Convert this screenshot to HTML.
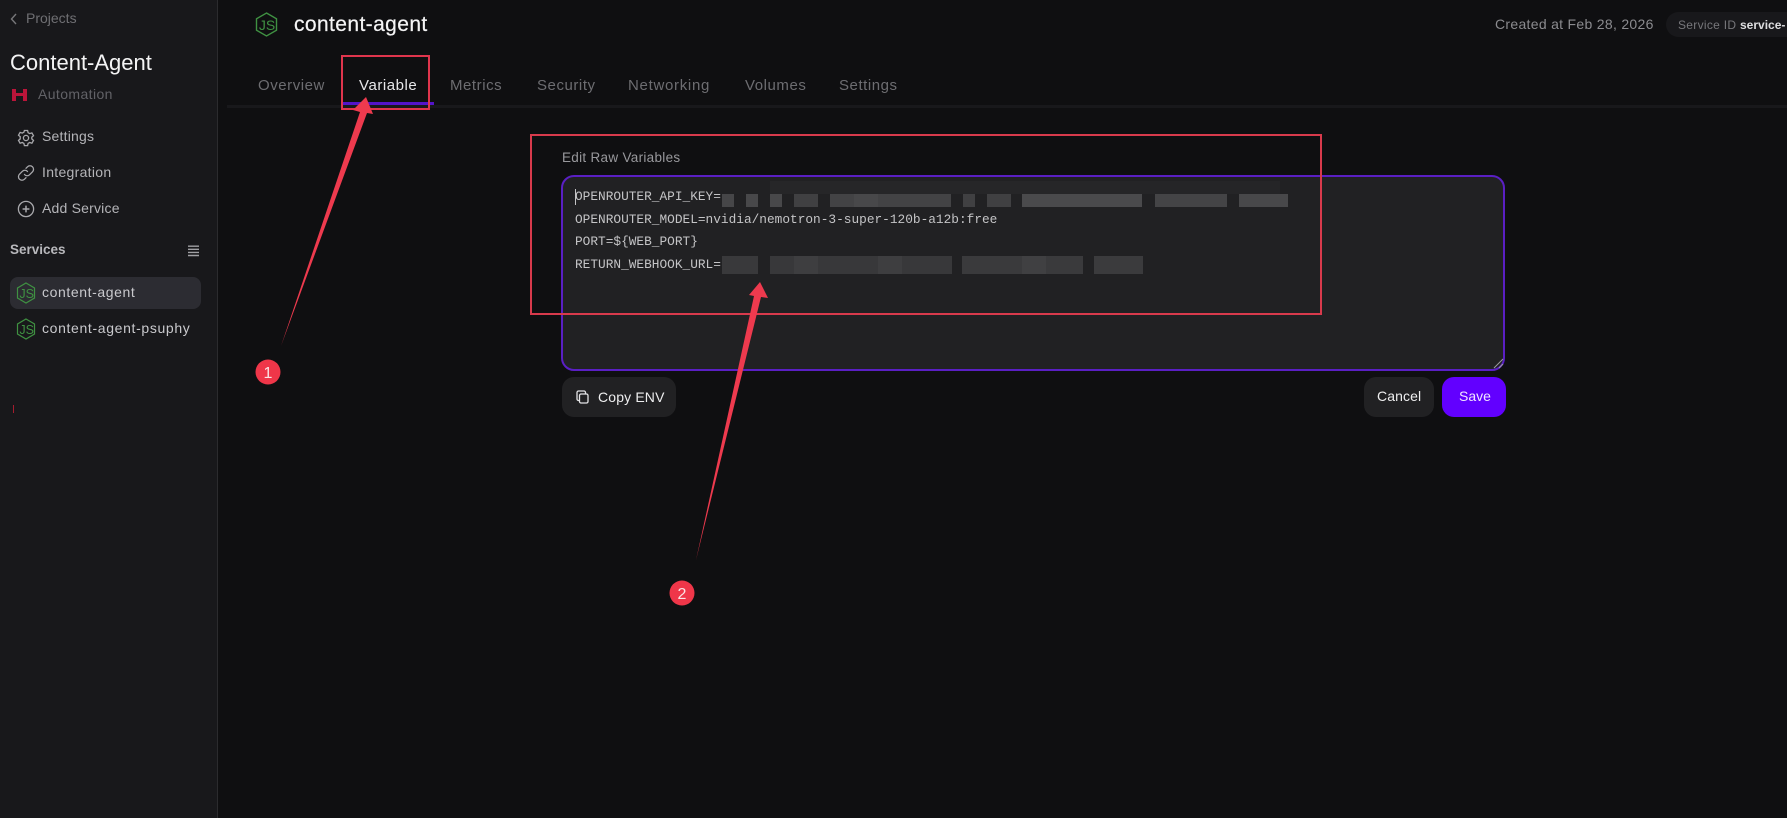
<!DOCTYPE html>
<html><head><meta charset="utf-8">
<style>
*{box-sizing:border-box}
html,body{margin:0;padding:0;width:1787px;height:818px;overflow:hidden;background:#0f0f11}
body{position:relative;font-family:"Liberation Sans",sans-serif}
.t{position:absolute;white-space:nowrap;line-height:20px}
.abs{position:absolute}
.mono{font-family:"Liberation Mono",monospace;font-size:12.8px;color:#c4c4c6}
svg{position:absolute;overflow:visible}
.tab{font-size:15px;color:#6d6d71;letter-spacing:.55px;top:76px}
</style></head><body>
<div class="abs" style="left:0;top:0;height:818px;background:#18181b;border-right:1px solid #2b2b2e;width:218px"></div>

<svg style="left:10px;top:13px" width="8" height="12" fill="none" stroke="#77777a" stroke-width="1.4"><path d="M6 1 L1.500 6 L6 11"/></svg>
<div class="t" style="left:26px;top:8px;font-size:14px;color:#6f6f73">Projects</div>
<div class="t" style="left:10px;top:53px;font-size:22px;color:#f4f4f5">Content-Agent</div>
<svg style="left:12px;top:89px" width="16" height="12" fill="#bb153a"><path d="M0 0h4v4h7V0h4v12h-4V7H4v5H0z"/></svg>
<div class="t" style="left:38px;top:84px;font-size:14px;color:#626267;letter-spacing:.4px">Automation</div>

<svg style="left:17px;top:129px" width="18" height="18" viewBox="0 0 18 18" fill="none" stroke="#a8a8ac" stroke-width="1.3"><path d="M7.400 1.500h3.200l.5 2.200 1.600.9 2.200-.7 1.600 2.800-1.700 1.500v1.700l1.700 1.500-1.600 2.800-2.200-.7-1.600.9-.5 2.200H7.400l-.5-2.200-1.600-.9-2.200.7-1.600-2.800 1.700-1.500V7.700L1.500 6.200l1.600-2.800 2.200.7 1.600-.9z"/><circle cx="9" cy="9" r="2.600"/></svg>
<div class="t" style="left:42px;top:126px;font-size:14px;color:#b4b4b8;letter-spacing:.2px">Settings</div>
<svg style="left:17px;top:164px" width="18" height="18" viewBox="0 0 18 18" fill="none" stroke="#a8a8ac" stroke-width="1.3" stroke-linecap="round"><path d="M7.500 10.500a3.400 3.400 0 0 0 5 .3l3-3a3.500 3.500 0 0 0-5-5L9 4.300"/><path d="M10.500 7.500a3.400 3.400 0 0 0-5-.3l-3 3a3.500 3.500 0 0 0 5 5L9 13.700"/></svg>
<div class="t" style="left:42px;top:162px;font-size:14px;color:#b4b4b8;letter-spacing:.3px">Integration</div>
<svg style="left:17px;top:200px" width="18" height="18" viewBox="0 0 18 18" fill="none" stroke="#a8a8ac" stroke-width="1.3"><circle cx="9" cy="9" r="7.600"/><path d="M9 5.600v6.800M5.600 9h6.800" stroke-width="1.5"/></svg>
<div class="t" style="left:42px;top:198px;font-size:14px;color:#b4b4b8;letter-spacing:.2px">Add Service</div>

<div class="t" style="left:10px;top:240px;font-size:13.500px;font-weight:700;color:#b8b8bc">Services</div>
<svg style="left:187px;top:245px" width="13" height="13" fill="#a0a0a4"><path d="M1 .5h11v1.400H1zM1 3.600h11V5H1zM1 6.700h11v1.400H1zM1 9.800h11v1.400H1z"/></svg>

<div class="abs" style="left:10px;top:277px;width:191px;height:32px;background:#2c2c32;border-radius:8px"></div>
<svg style="left:16px;top:282px" width="20" height="22" viewBox="0 0 20 22" fill="none" stroke="#3f9142" stroke-width="1.2"><path d="M10 1l8.500 5v10L10 21l-8.500-5V6z"/><text x="3.400" y="16" font-family="Liberation Sans" font-size="12.500" fill="#3f9142" stroke="none">JS</text></svg>
<div class="t" style="left:42px;top:282px;font-size:14px;color:#c9c9cd;letter-spacing:.6px">content-agent</div>
<svg style="left:16px;top:318px" width="20" height="22" viewBox="0 0 20 22" fill="none" stroke="#3f9142" stroke-width="1.2"><path d="M10 1l8.500 5v10L10 21l-8.500-5V6z"/><text x="3.400" y="16" font-family="Liberation Sans" font-size="12.500" fill="#3f9142" stroke="none">JS</text></svg>
<div class="t" style="left:42px;top:318px;font-size:14px;color:#c9c9cd;letter-spacing:.65px">content-agent-psuphy</div>
<div class="abs" style="left:13px;top:405px;width:1px;height:8px;background:#a51c2e"></div>

<svg style="left:255px;top:12px" width="23" height="25" viewBox="0 0 23 25" fill="none" stroke="#3f9142" stroke-width="1.4"><path d="M11.500 1l10 5.800v11.400l-10 5.800-10-5.800V6.800z"/><text x="3.900" y="18" font-family="Liberation Sans" font-size="14" fill="#3f9142" stroke="none">JS</text></svg>
<div class="t" style="left:294px;top:15px;font-size:21px;color:#f4f4f5;letter-spacing:.4px;-webkit-text-stroke:.2px #f4f4f5">content-agent</div>

<div class="t tab" style="left:258px">Overview</div>
<div class="t tab" style="left:359px;color:#e8e8ea">Variable</div>
<div class="t tab" style="left:450px">Metrics</div>
<div class="t tab" style="left:537px">Security</div>
<div class="t tab" style="left:628px;letter-spacing:.7px">Networking</div>
<div class="t tab" style="left:745px">Volumes</div>
<div class="t tab" style="left:839px">Settings</div>
<div class="abs" style="left:227px;top:105px;width:1560px;height:3px;background:#18181b"></div>
<div class="abs" style="left:343px;top:102px;width:91px;height:3px;background:#5314c9"></div>

<div class="t" style="left:1495px;top:14px;font-size:14px;color:#8b8b8f;letter-spacing:.3px">Created at Feb 28, 2026</div>
<div class="abs" style="left:1666px;top:12px;width:140px;height:25px;background:#18181b;border-radius:13px"></div>
<div class="t" style="left:1678px;top:15px;font-size:12px;color:#77777b;letter-spacing:.3px">Service ID</div>
<div class="t" style="left:1740px;top:15px;font-size:12px;font-weight:700;color:#dedee0">service-</div>

<div class="t" style="left:562px;top:148px;font-size:13.500px;color:#98989c;letter-spacing:.3px">Edit Raw Variables</div>
<div class="abs" style="left:561px;top:175px;width:944px;height:196px;background:#212123;border:2.500px solid #5a1fc4;border-radius:13px"></div>
<svg style="left:1494px;top:359px" width="9" height="9" stroke="#9a9a9e" stroke-width="1"><path d="M0 9L9 0M5 9L9 5"/></svg>

<svg style="left:0;top:0" width="1787" height="818">
<g fill="#262628"><rect x="770" y="181" width="350" height="13"/><rect x="1120" y="181" width="160" height="13" fill="#252527"/></g>
<rect x="722" y="194" width="12" height="13" fill="#464648"/><rect x="746" y="194" width="12" height="13" fill="#48484a"/><rect x="770" y="194" width="12" height="13" fill="#48484a"/><rect x="794" y="194" width="24" height="13" fill="#404042"/><rect x="830" y="194" width="121" height="13" fill="#434345"/><rect x="963" y="194" width="12" height="13" fill="#404042"/><rect x="987" y="194" width="24" height="13" fill="#404042"/><rect x="1022" y="194" width="120" height="13" fill="#4a4a4c"/><rect x="1155" y="194" width="72" height="13" fill="#444446"/><rect x="1239" y="194" width="49" height="13" fill="#48484a"/>
<rect x="722" y="256" width="36" height="18" fill="#39393b"/><rect x="770" y="256" width="182" height="18" fill="#38383a"/><rect x="962" y="256" width="121" height="18" fill="#3a3a3c"/><rect x="1094" y="256" width="49" height="18" fill="#3b3b3d"/>
<g fill="#fff" opacity=".03"><rect x="854" y="194" width="24" height="13"/><rect x="794" y="256" width="24" height="18"/><rect x="878" y="256" width="24" height="18"/><rect x="1022" y="256" width="24" height="18"/></g>
</svg>

<div class="t mono" style="left:575px;top:187px">OPENROUTER_API_KEY=</div>
<div class="t mono" style="left:575px;top:210px">OPENROUTER_MODEL=nvidia/nemotron-3-super-120b-a12b:free</div>
<div class="t mono" style="left:575px;top:232px">PORT=${WEB_PORT}</div>
<div class="t mono" style="left:575px;top:255px">RETURN_WEBHOOK_URL=</div>
<div class="abs" style="left:575px;top:189px;width:1px;height:16px;background:#c4c4c6"></div>

<div class="abs" style="left:562px;top:377px;width:114px;height:40px;background:#212123;border-radius:12px"></div>
<svg style="left:576px;top:390px" width="13" height="14" fill="none" stroke="#e4e4e6" stroke-width="1.300"><rect x="3.500" y="4" width="8.500" height="9" rx="1.500"/><path d="M3.500 10.500H2.500A1.500 1.500 0 0 1 1 9V2.500A1.500 1.500 0 0 1 2.500 1H8a1.500 1.500 0 0 1 1.500 1.500V4"/></svg>
<div class="t" style="left:598px;top:387px;font-size:14px;color:#eeeeef;letter-spacing:.15px">Copy ENV</div>
<div class="abs" style="left:1364px;top:377px;width:70px;height:40px;background:#212123;border-radius:12px"></div>
<div class="t" style="left:1377px;top:386px;font-size:14px;color:#eeeeef;letter-spacing:.1px">Cancel</div>
<div class="abs" style="left:1442px;top:377px;width:64px;height:40px;background:#6200ff;border-radius:12px"></div>
<div class="t" style="left:1459px;top:386px;font-size:14px;color:#f0e6ff">Save</div>

<svg style="left:0;top:0" width="1787" height="818" fill="none">
<rect x="342" y="56" width="87" height="53" stroke="#e0354d" stroke-width="2"/>
<rect x="531" y="135" width="790" height="179" stroke="#d83a4c" stroke-width="2"/>
<path d="M281 346 L360 112 L353 110 L366 97 L373 114 L367 113 Z" fill="#ee3a4e"/>
<path d="M696 560 L754 296 L749 295 L760 282 L768 298 L761 297 Z" fill="#ee3a4e"/>
<circle cx="268" cy="372" r="12.500" fill="#ef3649"/>
<circle cx="682" cy="593" r="12.500" fill="#ef3649"/>
<text x="268" y="378" text-anchor="middle" font-family="Liberation Sans" font-size="16" fill="#fbe3e5">1</text>
<text x="682" y="599" text-anchor="middle" font-family="Liberation Sans" font-size="16" fill="#fbe3e5">2</text>
</svg>
</body></html>
